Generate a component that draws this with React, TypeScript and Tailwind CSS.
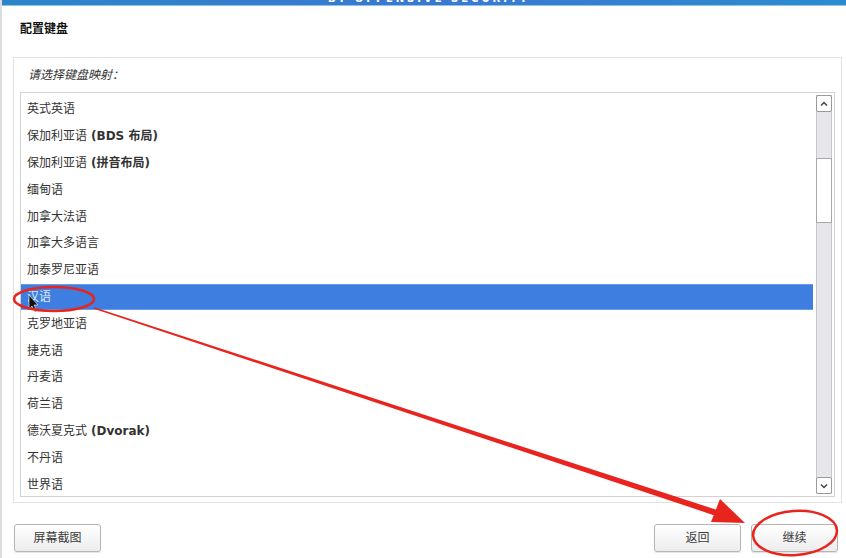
import React from "react";

const rows: { zh: string; suffix?: string }[] = [
  { zh: "英式英语" },
  { zh: "保加利亚语", suffix: "(BDS 布局)" },
  { zh: "保加利亚语", suffix: "(拼音布局)" },
  { zh: "缅甸语" },
  { zh: "加拿大法语" },
  { zh: "加拿大多语言" },
  { zh: "加泰罗尼亚语" },
  { zh: "汉语" },
  { zh: "克罗地亚语" },
  { zh: "捷克语" },
  { zh: "丹麦语" },
  { zh: "荷兰语" },
  { zh: "德沃夏克式", suffix: "(Dvorak)" },
  { zh: "不丹语" },
  { zh: "世界语" },
];

const font = { fontFamily: '"DejaVu Sans", "Noto Sans CJK SC", sans-serif' };

function Btn({ label, className = "" }: { label: string; className?: string }) {
  return (
    <div
      className={`w-[87px] h-[28px] rounded-[3px] border border-[#b4b4b4] bg-gradient-to-b from-white to-[#ededed] shadow-[0_1px_1px_rgba(0,0,0,0.12)] flex items-center justify-center text-[12px] text-[#3a3a3a] ${className}`}
    >
      {label}
    </div>
  );
}

export default function App() {
  return (
    <div
      className="relative w-[846px] h-[558px] overflow-hidden bg-white border-l-2 border-[#dcdcdc]"
      style={font}
    >
      {/* top banner */}
      <div className="h-[5px] bg-gradient-to-r from-[#2a86c8] via-[#3a78d0] to-[#2a8ccf] overflow-hidden flex justify-center">
        <span className="text-[10px] font-bold tracking-[3px] text-white leading-[10px] mt-[-6px] ml-[10px]">
          BY OFFENSIVE SECURITY
        </span>
      </div>
      <div className="h-[1px] bg-[#8fc3ea]" />

      <div className="pl-[11px] pr-[4px]">
        <div className="pt-[16px] leading-[14px] text-[12px] font-bold text-[#111] pl-[7px]">配置键盘</div>

        {/* panel */}
        <div className="mt-[21px] h-[446px] border border-[#e2e2e2] px-[6px]">
          <div className="pt-[10px] leading-[14px] text-[12px] italic text-[#333] pl-[8px]">请选择键盘映射：</div>
          <div className="mt-[10px] h-[405px] border border-[#d2d2d2] flex">
            <div className="flex-1 pt-[3px] pr-[3px]">
              {rows.map((r, i) => {
                const sel = i === 7;
                return (
                  <div
                    key={i}
                    className={`h-[26.8px] flex items-center pl-[6px] text-[12px] ${
                      sel ? "bg-[#3e7ee0] text-[#dce6f8] border-y border-[#6b9ae6]" : "text-[#333]"
                    }`}
                  >
                    <span>{r.zh}</span>
                    {r.suffix && <span className="font-bold ml-[4px]">{r.suffix}</span>}
                  </div>
                );
              })}
            </div>
            {/* scrollbar */}
            <div className="w-[16px] mr-[2px] my-[2px] flex flex-col bg-[#e7e7eb] border-x border-[#c8c8c8]">
              <div className="h-[17px] bg-white border border-[#9a9a9a] rounded-[2px] mx-[-1px] flex items-center justify-center">
                <svg width="8" height="6" viewBox="0 0 8 6">
                  <path d="M1 4.5 L4 1.5 L7 4.5" stroke="#444" strokeWidth="1.5" fill="none" />
                </svg>
              </div>
              <div className="h-[46px]" />
              <div className="h-[65px] bg-white border border-[#a8a8a8] mx-[-1px]" />
              <div className="flex-1" />
              <div className="h-[17px] bg-white border border-[#9a9a9a] rounded-[2px] mx-[-1px] flex items-center justify-center">
                <svg width="8" height="6" viewBox="0 0 8 6">
                  <path d="M1 1.5 L4 4.5 L7 1.5" stroke="#444" strokeWidth="1.5" fill="none" />
                </svg>
              </div>
            </div>
          </div>
        </div>

        {/* buttons */}
        <div className="mt-[21px] flex items-center pr-[4px]">
          <Btn label="屏幕截图" className="ml-[1px]" />
          <div className="flex-1" />
          <Btn label="返回" />
          <Btn label="继续" className="ml-[10px]" />
        </div>
      </div>

      {/* annotations overlay */}
      <svg className="absolute left-0 top-0 pointer-events-none" width="846" height="558" viewBox="0 0 846 558">
        {/* cursor */}
        <path d="M27 295 L27 309 L30 306 L33 312 L35 311 L32 305 L36 305 Z" fill="#111" stroke="#fff" strokeWidth="0.6" />
        <ellipse cx="52" cy="299" rx="40" ry="12" fill="none" stroke="#e8241f" strokeWidth="2.5" />
        <ellipse cx="793" cy="533" rx="42" ry="22" fill="none" stroke="#e8241f" strokeWidth="2.5" transform="rotate(-4 793 533)" />
        <polygon points="92.2,307.3 91.8,308.7 712.6,515.4 714.4,509.8" fill="#e8241f" />
        <polygon points="743,523 709,522 718,499" fill="#e8241f" />
      </svg>
    </div>
  );
}
